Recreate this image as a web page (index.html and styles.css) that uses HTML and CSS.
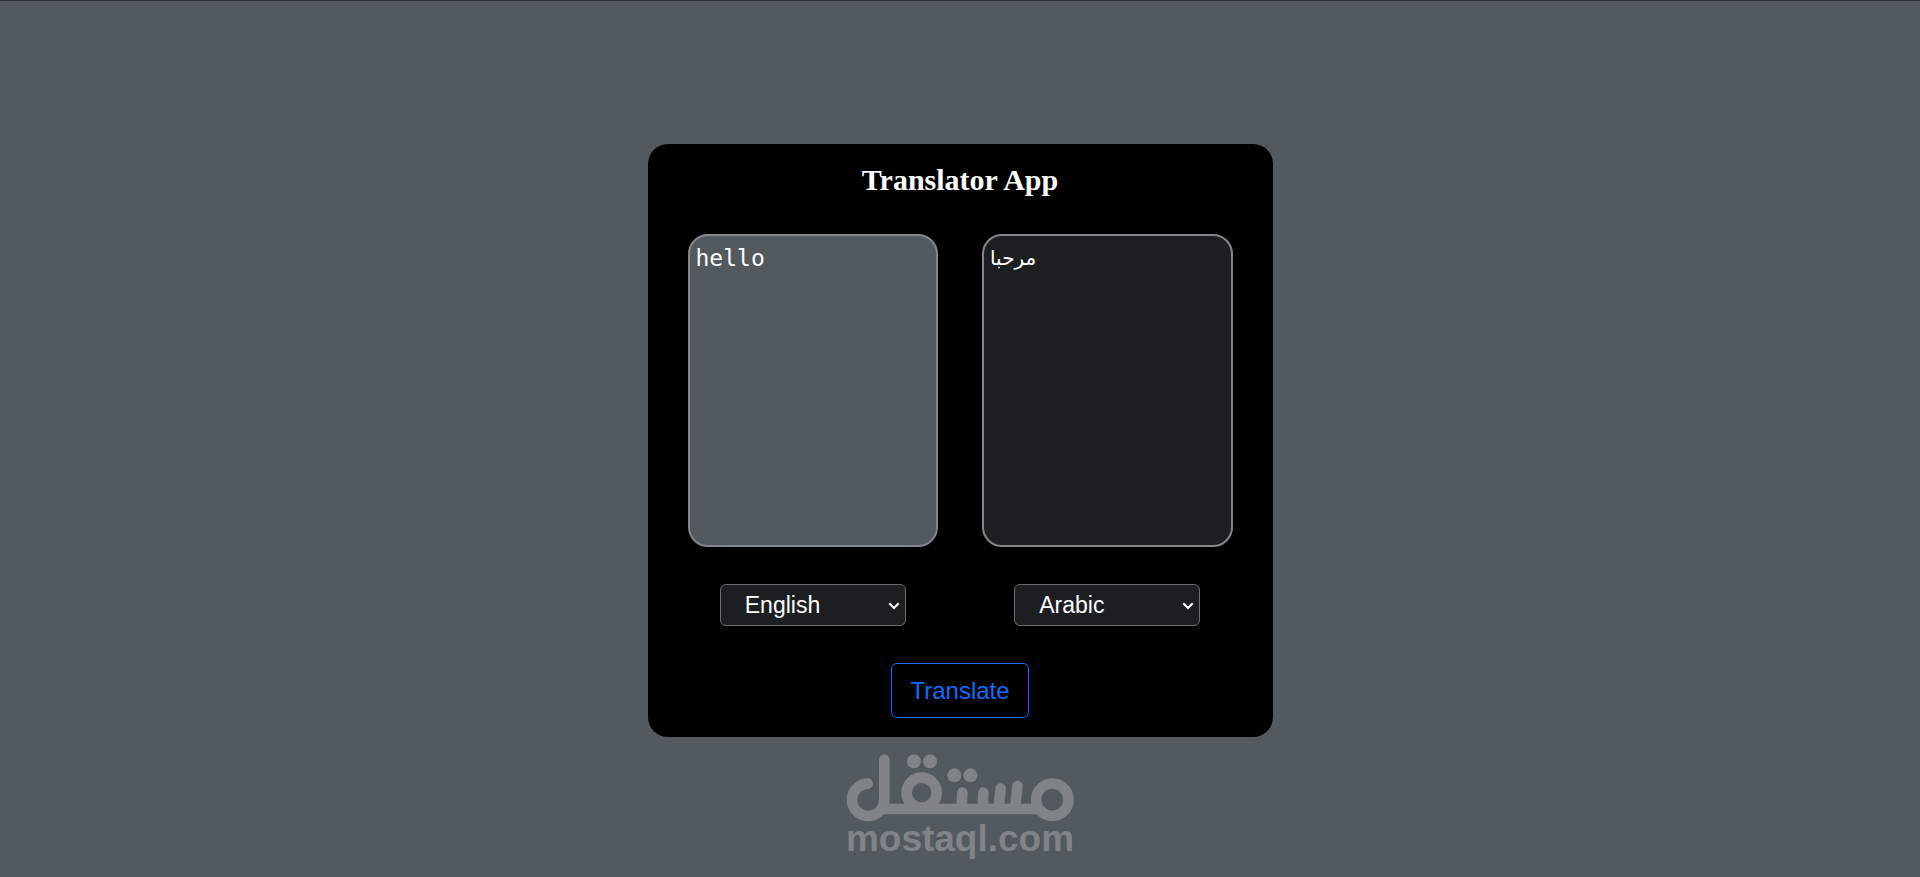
FILE: index.html
```html
<!DOCTYPE html>
<html lang="en">
<head>
<meta charset="utf-8">
<meta name="viewport" content="width=device-width, initial-scale=1">
<title>Translator App</title>
<link rel="stylesheet" href="styles.css">
</head>
<body>
<main class="page">
  <form class="card">
    <h1 class="title">Translator App</h1>
    <div class="columns">
      <div class="column">
        <textarea class="text-box text-source" aria-label="Text to translate" spellcheck="false">hello</textarea>
        <div class="select-wrap">
          <select class="language" aria-label="Source language">
            <option selected>English</option>
            <option>Arabic</option>
          </select>
          <svg class="chevron" viewBox="0 0 12 8" aria-hidden="true"><path d="M1.3 1.3 6 6 10.7 1.3"/></svg>
        </div>
      </div>
      <div class="column">
        <textarea class="text-box text-result" aria-label="Translation" lang="ar" spellcheck="false" readonly>مرحبا</textarea>
        <div class="select-wrap">
          <select class="language" aria-label="Target language">
            <option>English</option>
            <option selected>Arabic</option>
          </select>
          <svg class="chevron" viewBox="0 0 12 8" aria-hidden="true"><path d="M1.3 1.3 6 6 10.7 1.3"/></svg>
        </div>
      </div>
    </div>
    <button class="translate" type="button">Translate</button>
    <svg class="watermark" viewBox="33 41 684 318" role="img" aria-label="mostaql.com">
      <g class="mark-line">
        <path d="M98 130A48.500 48.500 0 1 0 148 178V58"/>
        <path class="mark-base" d="M140 206H612"/>
        <circle cx="652" cy="178" r="48.500"/>
        <circle cx="260" cy="157" r="45"/>
        <path d="M382 157 380 200M445 157 443 200M497 145 491 200M547 137 541 200"/>
      </g>
      <g class="mark-fill">
        <circle cx="237" cy="63" r="21"/>
        <circle cx="285" cy="63" r="21"/>
        <circle cx="358" cy="105" r="21"/>
        <circle cx="406" cy="105" r="21"/>
        <text class="mark-text" x="375" y="333">mostaql.com</text>
      </g>
    </svg>
  </form>
</main>
</body>
</html>
```
FILE: styles.css
```css
* {
  box-sizing: border-box;
}

body {
  margin: 0;
  background: #52595f;
  color: #fff;
}

.page {
  min-height: 100vh;
  display: flex;
  align-items: center;
  justify-content: center;
  padding-top: 3px;
  border-top: 1px solid #303134;
}

.card {
  position: relative;
  display: flex;
  flex-direction: column;
  align-items: center;
  width: 100%;
  max-width: 625px;
  padding: 19px 40px;
  border-radius: 20px;
  background: #000;
}

.title {
  margin: 0 0 37px;
  font: bold 30px/34px "Liberation Serif", serif;
}

.columns {
  display: flex;
  justify-content: space-between;
  width: 100%;
  gap: 44px;
}

.column {
  flex: 1;
  display: flex;
  flex-direction: column;
  align-items: center;
  gap: 37px;
}

.text-box {
  display: block;
  width: 100%;
  height: 313px;
  padding: 8px 6px;
  border: 2px solid #858689;
  border-radius: 20px;
  color: #fff;
  font: 23px/28px "DejaVu Sans Mono", monospace;
  resize: none;
  outline: none;
}

.text-source {
  background: #52595f;
}

.text-result {
  background: #1d1e20;
  font: 20px/28px "DejaVu Sans", sans-serif;
}

.select-wrap {
  position: relative;
  width: 186px;
}

.language {
  appearance: none;
  display: block;
  width: 100%;
  height: 42px;
  padding: 0 24px;
  border: 1px solid #6c6d70;
  border-radius: 6px;
  background: #1d1e20;
  color: #fff;
  font: 23px/28px "Liberation Sans", sans-serif;
}

.chevron {
  position: absolute;
  top: 18px;
  right: 6px;
  width: 12px;
  height: 8px;
  fill: none;
  stroke: #fff;
  stroke-width: 2;
  pointer-events: none;
}

.translate {
  margin-top: 37px;
  padding: 12px 18px;
  border: 1px solid #0d6efd;
  border-radius: 6px;
  background: transparent;
  color: #0d6efd;
  font: 24px/29px "Liberation Sans", sans-serif;
}

.watermark {
  position: absolute;
  top: calc(100% + 17px);
  left: 50%;
  width: 228px;
  height: 106px;
  transform: translateX(-50%);
}

.mark-line {
  fill: none;
  stroke: #808388;
  stroke-width: 32;
  stroke-linecap: round;
}

.mark-base {
  stroke-linecap: butt;
}

.mark-fill {
  fill: #808388;
}

.mark-text {
  font: bold 111px "Liberation Sans", sans-serif;
  text-anchor: middle;
}
```
